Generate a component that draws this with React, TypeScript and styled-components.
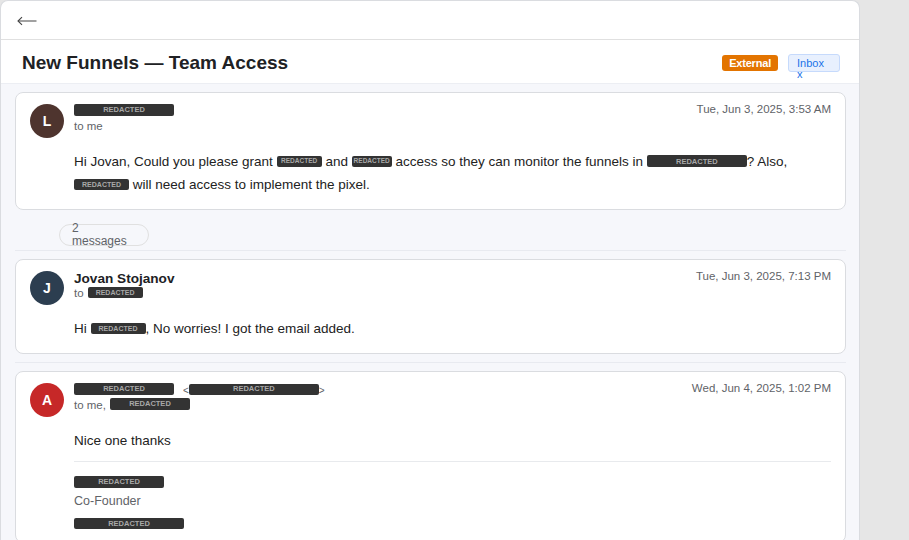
import React from "react";
import styled, { createGlobalStyle } from "styled-components";

const Global = createGlobalStyle`
  html, body { margin: 0; padding: 0; }
  body {
    background: #e6e6e6;
    font-family: "Liberation Sans", Arial, sans-serif;
    color: #202124;
    overflow: hidden;
  }
  * { box-sizing: border-box; }
`;

const Page = styled.div`
  display: flex;
  height: 540px;
`;

const Panel = styled.div`
  width: 860px;
  flex: none;
  background: #fff;
  border: 1px solid #dadce0;
  border-bottom: none;
  border-radius: 8px 8px 0 0;
  display: flex;
  flex-direction: column;
  overflow: hidden;
`;

const TopBar = styled.div`
  height: 39px;
  flex: none;
  display: flex;
  align-items: center;
  padding-left: 16px;
  border-bottom: 1px solid #e0e0e0;
`;

const BackButton = styled.button`
  background: none;
  border: none;
  padding: 0;
  display: flex;
  color: #444;
  cursor: pointer;
  margin-top: 2px;
`;

const Header = styled.div`
  height: 44px;
  flex: none;
  display: flex;
  align-items: center;
  justify-content: space-between;
  padding: 0 19px 0 21px;
  border-bottom: 1px solid #eceef3;
`;

const Title = styled.h1`
  margin: 2px 0 0;
  font-size: 19px;
  font-weight: 700;
  color: #202124;
`;

const Badges = styled.div`
  display: flex;
  align-items: center;
  gap: 10px;
  margin-top: 3px;
`;

const ExternalBadge = styled.span`
  height: 16px;
  padding: 0 7px;
  border-radius: 3px;
  background: #e37400;
  color: #fff;
  font-size: 11px;
  font-weight: 700;
  line-height: 16px;
  letter-spacing: -0.2px;
`;

const LabelBadge = styled.span`
  width: 52px;
  height: 18px;
  padding: 3px 8px 0;
  border: 1px solid #c6dafc;
  border-radius: 3px;
  background: #e8f0fe;
  color: #1a73e8;
  font-size: 11px;
  line-height: 11px;
`;

const LabelClose = styled.span`
  cursor: pointer;
`;

const Thread = styled.div`
  flex: 1;
  background: #f6f7fb;
  padding: 0 13px 0 14px;
`;

const Item = styled.div`
  padding: 8px 0;
  border-bottom: 1px solid #e8eaf0;
`;

const Card = styled.div`
  background: #fff;
  border: 1px solid #dadce0;
  border-radius: 8px;
  padding: 10px 14px 13px;
  display: grid;
  grid-template-columns: 34px 1fr;
  column-gap: 10px;
`;

const Avatar = styled.div<{ $bg: string }>`
  width: 34px;
  height: 34px;
  margin-top: 1px;
  border-radius: 50%;
  background: ${(p) => p.$bg};
  color: #fff;
  font-size: 14px;
  font-weight: 700;
  display: flex;
  align-items: center;
  justify-content: center;
`;

const Content = styled.div`
  min-width: 0;
`;

const MetaRow = styled.div`
  display: flex;
  justify-content: space-between;
  align-items: flex-start;
`;

const Sender = styled.div`
  display: flex;
  flex-direction: column;
`;

const FromLine = styled.div`
  height: 16px;
  display: flex;
  align-items: center;
  font-size: 13.6px;
  font-weight: 700;
  color: #202124;
`;

const Angle = styled.span<{ $gap?: number }>`
  font-size: 10px;
  font-weight: 400;
  color: #5f6368;
  margin-top: 1px;
  margin-left: ${(p) => p.$gap ?? 0}px;
`;

const ToLine = styled.div`
  height: 14px;
  display: flex;
  align-items: center;
  gap: 4px;
  font-size: 11.5px;
  color: #5f6368;
`;

const DateText = styled.div`
  font-size: 11.5px;
  line-height: 14px;
  color: #5f6368;
  margin-top: -1px;
`;

const Body = styled.div`
  margin-top: 17px;
  font-size: 13.5px;
  line-height: 23px;
  color: #222;
`;

const Divider = styled.hr`
  border: none;
  border-top: 1px solid #e8eaed;
  margin: 9px 0 0;
`;

const Signature = styled.div`
  display: flex;
  flex-direction: column;
  align-items: flex-start;
  padding-top: 16px;
`;

const SigTitle = styled.div`
  font-size: 12.5px;
  line-height: 20px;
  color: #5f6368;
  margin: 3px 0 9px;
`;

const Redacted = styled.span<{ $w: number; $h?: number; $fs?: number }>`
  display: inline-flex;
  align-items: center;
  justify-content: center;
  vertical-align: middle;
  width: ${(p) => p.$w}px;
  height: ${(p) => p.$h ?? 12}px;
  background: #333;
  border-radius: 2px;
  color: #a8a8a8;
  font-family: "Liberation Sans", Arial, sans-serif;
  font-size: ${(p) => p.$fs ?? 7.5}px;
  font-weight: 700;
  line-height: 1;
  overflow: hidden;
  white-space: nowrap;
  margin-top: -2px;
`;

const CollapsedPill = styled.div`
  width: 90px;
  height: 22px;
  margin: 14px 0 -4px 44px;
  padding: 0 12px;
  border: 1px solid #e0e0e0;
  border-radius: 11px;
  display: flex;
  align-items: center;
  font-size: 12px;
  line-height: 13px;
  color: #5f6368;
`;

const R = (p: { w: number; h?: number; fs?: number }) => (
  <Redacted $w={p.w} $h={p.h} $fs={p.fs}>REDACTED</Redacted>
);

const BackArrow = () => (
  <svg width="20" height="10" viewBox="0 0 20 10" fill="none" stroke="currentColor" strokeWidth="1.1">
    <path d="M1 5 H19.5" />
    <path d="M5 1.2 L1 5 L5 8.8" strokeLinejoin="miter" />
  </svg>
);

export default function App() {
  return (
    <>
      <Global />
      <Page>
        <Panel>
          <TopBar>
            <BackButton aria-label="Back">
              <BackArrow />
            </BackButton>
          </TopBar>
          <Header>
            <Title>New Funnels — Team Access</Title>
            <Badges>
              <ExternalBadge>External</ExternalBadge>
              <LabelBadge>
                Inbox <LabelClose>x</LabelClose>
              </LabelBadge>
            </Badges>
          </Header>
          <Thread>
            <Item>
              <Card>
                <Avatar $bg="#4e342e">L</Avatar>
                <Content>
                  <MetaRow>
                    <Sender>
                      <FromLine>
                        <R w={100} />
                      </FromLine>
                      <ToLine>to me</ToLine>
                    </Sender>
                    <DateText>Tue, Jun 3, 2025, 3:53 AM</DateText>
                  </MetaRow>
                  <Body>
                    Hi Jovan, Could you please grant <R w={45} h={11} fs={6.5} /> and{" "}
                    <R w={40} h={11} fs={6.5} /> access so they can monitor the funnels in{" "}
                    <R w={100} h={12} />? Also, <R w={55} h={11} fs={7} /> will need access to
                    implement the pixel.
                  </Body>
                </Content>
              </Card>
              <CollapsedPill>
                <span>2 messages</span>
              </CollapsedPill>
            </Item>
            <Item>
              <Card>
                <Avatar $bg="#2c3e50">J</Avatar>
                <Content>
                  <MetaRow>
                    <Sender>
                      <FromLine>Jovan Stojanov</FromLine>
                      <ToLine>
                        to <R w={55} h={11} fs={7} />
                      </ToLine>
                    </Sender>
                    <DateText>Tue, Jun 3, 2025, 7:13 PM</DateText>
                  </MetaRow>
                  <Body>
                    Hi <R w={55} h={11} fs={7} />, No worries! I got the email added.
                  </Body>
                </Content>
              </Card>
            </Item>
            <Item>
              <Card>
                <Avatar $bg="#c62828">A</Avatar>
                <Content>
                  <MetaRow>
                    <Sender>
                      <FromLine>
                        <R w={100} />
                        <Angle $gap={9}>&lt;</Angle>
                        <R w={130} h={11} />
                        <Angle>&gt;</Angle>
                      </FromLine>
                      <ToLine>
                        to me, <R w={80} h={12} />
                      </ToLine>
                    </Sender>
                    <DateText>Wed, Jun 4, 2025, 1:02 PM</DateText>
                  </MetaRow>
                  <Body>Nice one thanks</Body>
                  <Divider />
                  <Signature>
                    <R w={90} />
                    <SigTitle>Co-Founder</SigTitle>
                    <R w={110} h={11} />
                  </Signature>
                </Content>
              </Card>
            </Item>
          </Thread>
        </Panel>
      </Page>
    </>
  );
}
